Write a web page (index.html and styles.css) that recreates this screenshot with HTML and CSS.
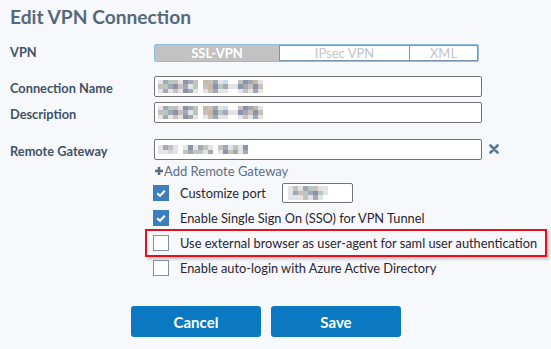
FILE: index.html
```html
<!DOCTYPE html>
<html>
<head>
<meta charset="utf-8">
<link rel="stylesheet" href="styles.css">
</head>
<body>
<div class="page">
  <h1 class="title">Edit VPN Connection</h1>

  <div class="row row-vpn">
    <div class="label label-vpn">VPN</div>
    <div class="seg">
      <div class="seg-item seg-active seg-ssl">SSL-VPN</div>
      <div class="seg-item seg-ipsec">IPsec VPN</div>
      <div class="seg-item seg-xml">XML</div>
    </div>
  </div>

  <div class="row row-name">
    <div class="label">Connection Name</div>
    <div class="input">
      <div class="mosaic m3">
        <span class="e"></span><span class="a"></span><span class="e"></span>
        <span class="b"></span><span class="c"></span><span class="b"></span>
        <span class="c"></span><span class="b"></span><span class="e"></span>
        <span class="a"></span><span class="d"></span><span class="a"></span>
        <span class="e"></span><span class="a"></span><span class="e"></span>
        <span class="d"></span><span class="b"></span><span class="d"></span>
        <span class="b"></span><span class="e"></span><span class="b"></span>
        <span class="a"></span><span class="c"></span><span class="e"></span>
        <span class="w"></span><span class="w"></span><span class="w"></span>
        <span class="f"></span><span class="a"></span><span class="e"></span>
        <span class="a"></span><span class="f"></span><span class="a"></span>
        <span class="b"></span><span class="d"></span><span class="b"></span>
        <span class="e"></span><span class="c"></span><span class="e"></span>
        <span class="g"></span><span class="b"></span><span class="e"></span>
        <span class="w"></span><span class="e"></span><span class="w"></span>
        <span class="w"></span><span class="e"></span><span class="w"></span>
        <span class="a"></span><span class="d"></span><span class="e"></span>
        <span class="d"></span><span class="b"></span><span class="a"></span>
        <span class="b"></span><span class="a"></span><span class="e"></span>
        <span class="f"></span><span class="d"></span><span class="b"></span>
        <span class="e"></span><span class="a"></span><span class="e"></span>
      </div>
    </div>
  </div>

  <div class="row row-desc">
    <div class="label">Description</div>
    <div class="input">
      <div class="mosaic m3">
        <span class="e"></span><span class="a"></span><span class="e"></span>
        <span class="b"></span><span class="c"></span><span class="b"></span>
        <span class="c"></span><span class="b"></span><span class="e"></span>
        <span class="a"></span><span class="d"></span><span class="a"></span>
        <span class="e"></span><span class="a"></span><span class="e"></span>
        <span class="d"></span><span class="b"></span><span class="d"></span>
        <span class="b"></span><span class="e"></span><span class="b"></span>
        <span class="a"></span><span class="c"></span><span class="e"></span>
        <span class="w"></span><span class="w"></span><span class="w"></span>
        <span class="f"></span><span class="a"></span><span class="e"></span>
        <span class="a"></span><span class="f"></span><span class="a"></span>
        <span class="b"></span><span class="d"></span><span class="b"></span>
        <span class="e"></span><span class="c"></span><span class="e"></span>
        <span class="g"></span><span class="b"></span><span class="e"></span>
        <span class="w"></span><span class="e"></span><span class="w"></span>
        <span class="w"></span><span class="e"></span><span class="w"></span>
        <span class="a"></span><span class="d"></span><span class="e"></span>
        <span class="d"></span><span class="b"></span><span class="a"></span>
        <span class="b"></span><span class="a"></span><span class="e"></span>
        <span class="f"></span><span class="d"></span><span class="b"></span>
        <span class="e"></span><span class="a"></span><span class="e"></span>
      </div>
    </div>
  </div>

  <div class="row row-gw">
    <div class="label">Remote Gateway</div>
    <div class="input">
      <div class="mosaic m2">
        <span class="e"></span><span class="e"></span>
        <span class="b"></span><span class="e"></span>
        <span class="a"></span><span class="g"></span>
        <span class="e"></span><span class="e"></span>
        <span class="w"></span><span class="w"></span>
        <span class="e"></span><span class="a"></span>
        <span class="d"></span><span class="b"></span>
        <span class="e"></span><span class="a"></span>
        <span class="b"></span><span class="c"></span>
        <span class="a"></span><span class="e"></span>
        <span class="e"></span><span class="b"></span>
        <span class="w"></span><span class="w"></span>
        <span class="a"></span><span class="e"></span>
        <span class="b"></span><span class="d"></span>
        <span class="e"></span><span class="a"></span>
        <span class="c"></span><span class="b"></span>
        <span class="e"></span><span class="e"></span>
        <span class="d"></span><span class="b"></span>
      </div>
    </div>
    <svg class="remove" viewBox="0 0 10 10" width="10" height="10">
      <path d="M1.5 1.5 L8.5 8.5 M8.5 1.5 L1.5 8.5" stroke="#5b7790" stroke-width="2.6" stroke-linecap="round"/>
    </svg>
  </div>

  <div class="options">
    <div class="add-gw">
      <svg class="plus" viewBox="0 0 10 10" width="10" height="10">
        <path d="M5 1 V9 M1 5 H9" stroke="#5a6e80" stroke-width="2.6"/>
      </svg>Add Remote Gateway
    </div>

    <div class="opt opt-port">
      <span class="cb cb-on"><svg viewBox="0 0 16 16" width="16" height="16"><path d="M4.2 8.2 L7 10.8 L11.8 5.8" fill="none" stroke="#fff" stroke-width="2.1"/></svg></span>
      <span class="opt-text">Customize port</span>
      <div class="input input-port">
        <div class="mosaic m3">
          <span class="e"></span><span class="e"></span><span class="e"></span>
          <span class="a"></span><span class="b"></span><span class="e"></span>
          <span class="e"></span><span class="a"></span><span class="e"></span>
          <span class="b"></span><span class="c"></span><span class="a"></span>
          <span class="c"></span><span class="b"></span><span class="e"></span>
          <span class="a"></span><span class="d"></span><span class="b"></span>
          <span class="e"></span><span class="c"></span><span class="e"></span>
          <span class="e"></span><span class="e"></span><span class="w"></span>
        </div>
      </div>
    </div>

    <div class="opt opt-sso">
      <span class="cb cb-on"><svg viewBox="0 0 16 16" width="16" height="16"><path d="M4.2 8.2 L7 10.8 L11.8 5.8" fill="none" stroke="#fff" stroke-width="2.1"/></svg></span>
      <span class="opt-text">Enable Single Sign On (SSO) for VPN Tunnel</span>
    </div>

    <div class="opt opt-highlight">
      <span class="cb"></span>
      <span class="opt-text">Use external browser as user-agent for saml user authentication</span>
    </div>

    <div class="opt opt-azure">
      <span class="cb"></span>
      <span class="opt-text">Enable auto-login with Azure Active Directory</span>
    </div>
  </div>

  <div class="buttons">
    <button class="btn">Cancel</button>
    <button class="btn">Save</button>
  </div>
</div>
</body>
</html>
```

FILE: styles.css
```css
html, body {
  margin: 0;
  padding: 0;
}
body {
  background: #f7f8fb;
  font-family: Lato, "Open Sans", sans-serif;
  width: 551px;
  height: 349px;
  overflow: hidden;
}
.page {
  padding: 4px 0 0 10px;
}
.title {
  margin: 0;
  height: 26px;
  line-height: 26px;
  font-size: 19.2px;
  font-weight: 700;
  color: #55697b;
}
.row {
  display: flex;
  align-items: center;
}
.label {
  width: 144px;
  flex: none;
  font-size: 12.8px;
  font-weight: 700;
  color: #3f5265;
  padding-top: 2px;
}
.label-vpn {
  padding-top: 0;
  margin-top: -3px;
}
.row-vpn {
  margin-top: 14px;
}
.seg {
  display: flex;
  width: 325px;
  height: 18px;
  box-sizing: border-box;
  border: 1px solid #8fbde3;
  border-radius: 2px;
  background: #fff;
}
.seg-item {
  box-sizing: border-box;
  display: flex;
  align-items: center;
  justify-content: center;
  font-size: 13px;
  color: #c0c4ca;
  border: 1px solid #7a93ab;
}
.seg-ssl {
  width: 124px;
  border: none;
}
.seg-active {
  background: #c2c2c2;
  color: #fff;
  font-weight: 700;
}
.seg-ipsec {
  width: 130px;
  border-right: none;
}
.seg-xml {
  flex: 1;
}
.row-name {
  margin-top: 14px;
}
.row-desc {
  margin-top: 5px;
}
.row-gw {
  margin-top: 16px;
}
.input {
  box-sizing: border-box;
  width: 328px;
  height: 21px;
  border: 1px solid #737373;
  border-radius: 2px;
  background: #fff;
  display: flex;
  align-items: center;
  padding-left: 3px;
}
.mosaic {
  display: grid;
  grid-auto-flow: column;
  grid-auto-columns: 5px;
}
.m3 {
  grid-template-rows: repeat(3, 4.5px);
}
.m2 {
  grid-template-rows: repeat(2, 4.5px);
}
.mosaic .a { background: #c8c0bc; }
.mosaic .b { background: #a3a9b4; }
.mosaic .c { background: #b6c8c0; }
.mosaic .d { background: #8a93a9; }
.mosaic .e { background: #e4e4e6; }
.mosaic .f { background: #c5b7a6; }
.mosaic .g { background: #c9dcea; }
.mosaic .w { background: transparent; }
.remove {
  margin-left: 7px;
  margin-top: -1px;
}
.options {
  margin-left: 143px;
}
.add-gw {
  margin-top: 3px;
  height: 16px;
  display: flex;
  align-items: center;
  font-size: 13px;
  color: #5b6f82;
  margin-left: 1px;
}
.opt {
  display: flex;
  align-items: center;
  font-size: 12.8px;
  color: #2a2530;
  height: 16px;
}
.cb {
  box-sizing: border-box;
  width: 16px;
  height: 16px;
  flex: none;
  border: 1px solid #7d91a3;
  background: #fff;
  display: block;
}
.cb-on {
  background: #3d7ebf;
  border-color: #3d7ebf;
}
.cb svg {
  display: block;
  margin: -1px;
}
.opt-text {
  margin-left: 11px;
}
.opt-port {
  margin-top: 4px;
  height: 20px;
}
.input-port {
  width: 71px;
  height: 20px;
  margin-left: 16px;
  padding-left: 5px;
}
.opt-sso {
  margin-top: 7px;
}
.opt-highlight {
  margin-top: 3px;
  margin-left: -8px;
  width: 402px;
  height: 28px;
  box-sizing: border-box;
  border: 2px solid #e3111b;
  padding-left: 6px;
  box-shadow: 2px 2px 3px rgba(0, 0, 0, 0.25);
}
.opt-azure {
  margin-top: 3px;
}
.buttons {
  display: flex;
  gap: 10px;
  margin-top: 30px;
  margin-left: 121px;
}
.btn {
  width: 130px;
  height: 31px;
  border: none;
  border-radius: 3px;
  background: #0a79c1;
  color: #fff;
  font-family: Lato, "Open Sans", sans-serif;
  font-size: 15px;
  font-weight: 700;
  padding: 0;
}
```
